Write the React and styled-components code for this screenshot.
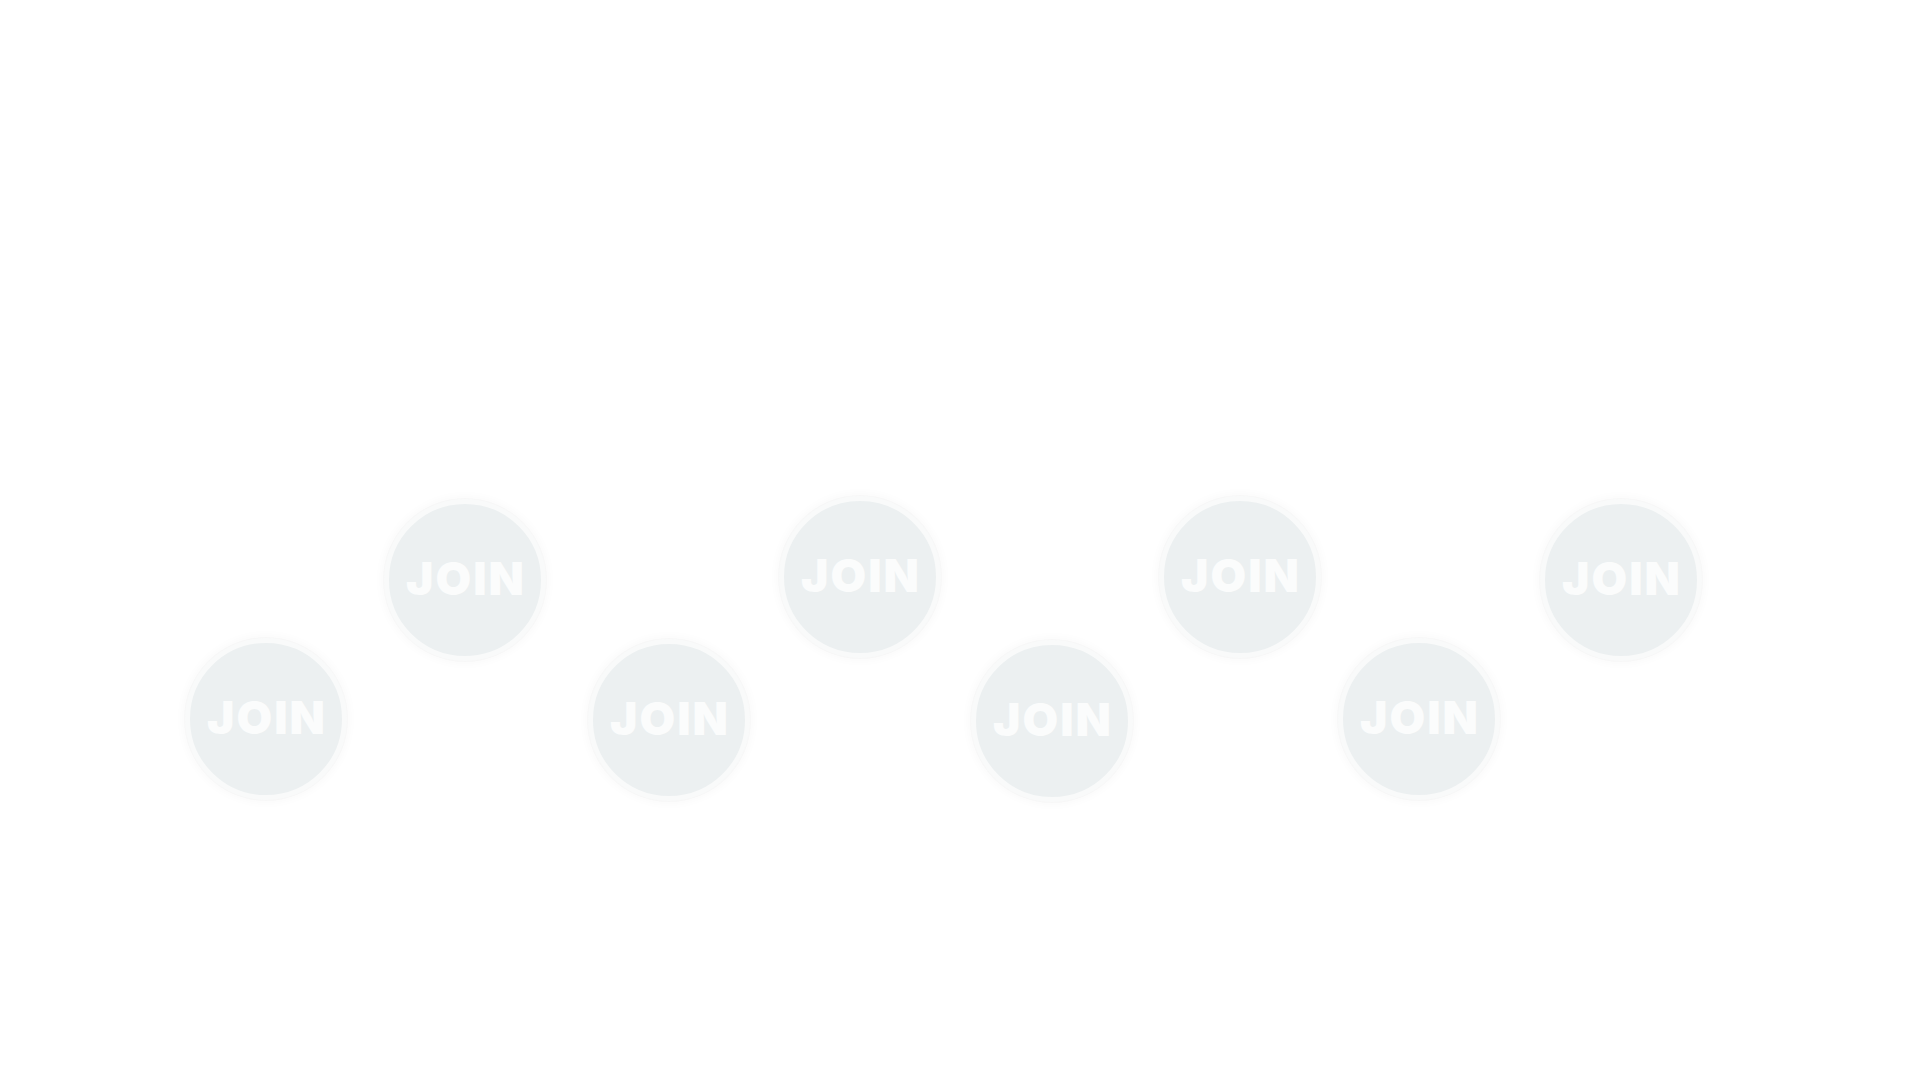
import React from "react";
import styled, { createGlobalStyle } from "styled-components";

const GlobalStyle = createGlobalStyle`
    html, body {
        margin: 0;
        padding: 0;
        background: #ffffff;
    }
    body {
        width: 1920px;
        height: 1080px;
        overflow: hidden;
        font-family: Inter, "Liberation Sans", sans-serif;
    }
`;

const Stage = styled.div`
    width: 1920px;
    height: 1080px;
    display: flex;
    align-items: flex-start;
`;

const Bubble = styled.button`
    flex-shrink: 0;
    width: 162px;
    height: 162px;
    margin-top: ${(props) => props.top}px;
    margin-left: ${(props) => props.gap}px;
    border-radius: 50%;
    border: 5px solid #f9fafa;
    background: #ecf0f1;
    box-shadow: 0 0 0 1px rgba(0, 0, 0, 0.015), 0 0 9px 3px rgba(0, 0, 0, 0.025);
    display: flex;
    align-items: center;
    justify-content: center;
    padding: 0;
    cursor: pointer;
`;

const Label = styled.span`
    color: #fbfcfc;
    font-family: Inter, "DejaVu Sans", sans-serif;
    font-weight: 900;
    font-size: 46px;
    letter-spacing: 2px;
    line-height: 1;
    margin-top: -4px;
    margin-right: -2px;
`;

const bubbles = [
    { gap: 185, top: 638 },
    { gap: 37, top: 499 },
    { gap: 42, top: 639 },
    { gap: 29, top: 496 },
    { gap: 30, top: 640 },
    { gap: 26, top: 496 },
    { gap: 17, top: 638 },
    { gap: 40, top: 499 },
];

const App = () => {
    return (
        <>
            <GlobalStyle />
            <Stage>
                {bubbles.map((b, i) => (
                    <Bubble key={i} gap={b.gap} top={b.top}>
                        <Label>JOIN</Label>
                    </Bubble>
                ))}
            </Stage>
        </>
    );
};

export default App;
